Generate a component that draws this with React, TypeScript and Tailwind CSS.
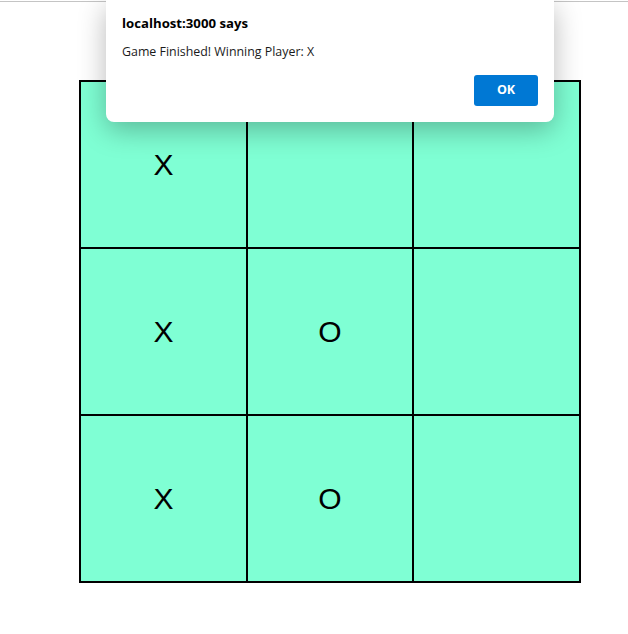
import React from "react";

const board = [
  ["X", "", ""],
  ["X", "O", ""],
  ["X", "O", ""],
];

export default function App() {
  return (
    <div className="relative w-[628px] h-[634px] bg-white overflow-hidden">
      <div className="h-px w-full bg-[#c4c4c4] mt-px" />
      <div className="ml-[79px] mt-[78px] w-[502px] border border-black grid grid-cols-[167px_166px_167px] grid-rows-[167px_167px_167px] bg-[#7fffd4]">
        {board.flat().map((v, i) => (
          <div
            key={i}
            className="border border-black flex items-center justify-center text-[30px] text-black font-['Liberation_Sans',Arial,sans-serif]"
          >
            {v}
          </div>
        ))}
      </div>
      <div className="absolute left-[106px] top-0 w-[448px] h-[122px] bg-white rounded-b-[8px] shadow-[0_8px_28px_rgba(0,0,0,0.28)] font-['Open_Sans','Noto_Sans',sans-serif]">
        <div className="pl-4 pt-[14px] text-[13.2px] font-bold text-black leading-[18px]">
          localhost:3000 says
        </div>
        <div className="pl-4 pt-[11px] text-[12.4px] text-[#1a1a1a] leading-[18px]">
          Game Finished! Winning Player: X
        </div>
        <div className="absolute right-4 bottom-4 w-[64px] h-[31px] bg-[#0078d4] rounded-[3px] flex items-center justify-center text-white text-[12.5px] font-bold">
          OK
        </div>
      </div>
    </div>
  );
}
